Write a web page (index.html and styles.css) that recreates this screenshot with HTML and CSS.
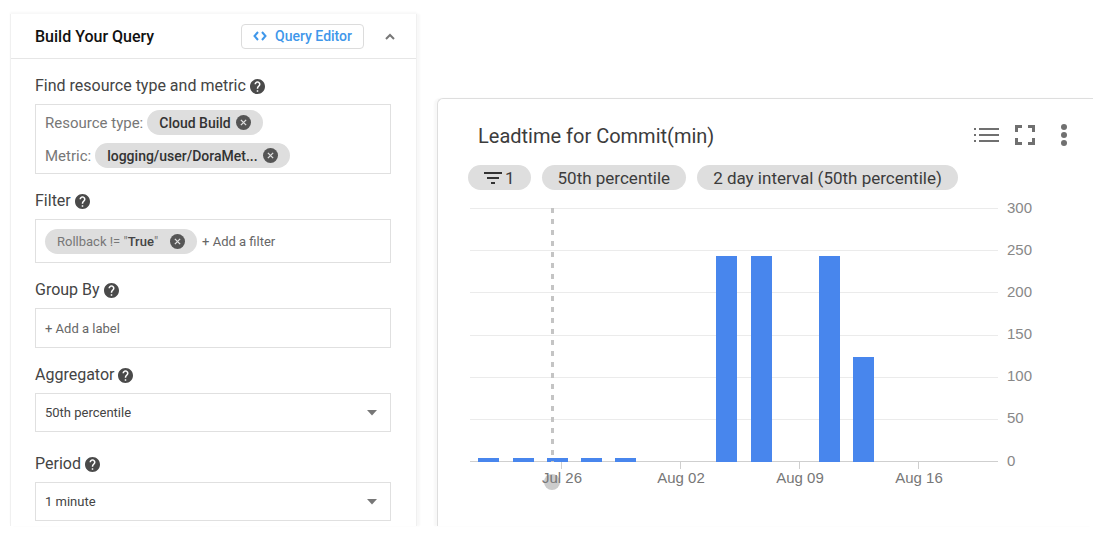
FILE: index.html
```html
<!DOCTYPE html>
<html lang="en">
<head>
<meta charset="utf-8">
<meta name="viewport" content="width=device-width, initial-scale=1">
<title>Leadtime for Commit</title>
<link rel="stylesheet" href="styles.css">
</head>
<body>
<svg class="defs" aria-hidden="true">
  <symbol id="help" viewBox="2 2 20 20"><path d="M12 2C6.480 2 2 6.480 2 12s4.480 10 10 10 10-4.480 10-10S17.520 2 12 2zm1 17h-2v-2h2v2zm2.070-7.750l-.9.920C13.450 12.900 13 13.500 13 15h-2v-.5c0-1.100.450-2.100 1.170-2.830l1.240-1.260c.370-.360.590-.860.590-1.410 0-1.100-.9-2-2-2s-2 .9-2 2H8c0-2.210 1.790-4 4-4s4 1.790 4 4c0 .880-.360 1.680-.930 2.250z" stroke="none"/></symbol>
  <symbol id="cancel" viewBox="2 2 20 20"><circle cx="12" cy="12" r="10"/><path d="M8.500 8.500l7 7m0-7l-7 7" stroke="#dedede" stroke-width="1.800"/></symbol>
  <symbol id="caret" viewBox="0 0 10 6"><path d="M0 0h10L5 5.500z"/></symbol>
</svg>
<main class="page">
  <form class="panel">
    <header class="panel-head">
      <h2 class="panel-title">Build Your Query</h2>
      <button type="button" class="editor-btn">
        <svg class="code-icon" viewBox="0 0 14 10" aria-hidden="true"><path d="M5 1L1.500 5 5 9M9 1l3.500 4L9 9"/></svg>
        Query Editor
      </button>
      <button type="button" class="collapse" aria-label="Collapse">
        <svg class="chevron" viewBox="0 0 10 7" aria-hidden="true"><path d="M1 6l4-4 4 4"/></svg>
      </button>
    </header>
    <div class="fields">
      <section class="field">
        <h3 class="label">Find resource type and metric <svg class="help"><use href="#help"/></svg></h3>
        <div class="box resource">
          <div class="row"><span class="key">Resource type:</span><span class="chip strong">Cloud Build<button type="button" class="remove" aria-label="Remove Cloud Build"><svg class="x"><use href="#cancel"/></svg></button></span></div>
          <div class="row"><span class="key">Metric:</span><span class="chip strong">logging/user/DoraMet...<button type="button" class="remove" aria-label="Remove metric"><svg class="x"><use href="#cancel"/></svg></button></span></div>
        </div>
      </section>
      <section class="field">
        <h3 class="label">Filter <svg class="help"><use href="#help"/></svg></h3>
        <div class="box filter">
          <span class="chip rule"><span>Rollback != "<b class="value">True</b>"</span><button type="button" class="remove" aria-label="Remove filter"><svg class="x"><use href="#cancel"/></svg></button></span>
          <button type="button" class="add">+ Add a filter</button>
        </div>
      </section>
      <section class="field">
        <h3 class="label">Group By <svg class="help"><use href="#help"/></svg></h3>
        <div class="box group"><button type="button" class="add">+ Add a label</button></div>
      </section>
      <section class="field choice">
        <label class="label" for="aggregator">Aggregator <svg class="help"><use href="#help"/></svg></label>
        <div class="select-wrap">
          <select id="aggregator" class="select"><option>50th percentile</option></select>
          <svg class="caret" aria-hidden="true"><use href="#caret"/></svg>
        </div>
      </section>
      <section class="field choice">
        <label class="label" for="period">Period <svg class="help"><use href="#help"/></svg></label>
        <div class="select-wrap">
          <select id="period" class="select"><option>1 minute</option></select>
          <svg class="caret" aria-hidden="true"><use href="#caret"/></svg>
        </div>
      </section>
    </div>
  </form>

  <section class="card">
    <header class="card-head">
      <h1 class="card-title">Leadtime for Commit(min)</h1>
      <div class="tools">
        <button type="button" class="tool" aria-label="Legend"><svg class="tool-icon" viewBox="0 0 26 26"><path d="M1 6h2v2H1zm0 6h2v2H1zm0 6h2v2H1zM6 6h20v2H6zm0 6h20v2H6zm0 6h20v2H6z"/></svg></button>
        <button type="button" class="tool" aria-label="Full screen"><svg class="tool-icon" viewBox="0 0 26 26"><path d="M3 3h7v3H6v4H3zM16 3h7v7h-3V6h-4zM3 16h3v4h4v3H3zM20 16h3v7h-7v-3h4z"/></svg></button>
        <button type="button" class="tool" aria-label="More options"><svg class="tool-icon" viewBox="0 0 26 26"><circle cx="13" cy="5" r="3"/><circle cx="13" cy="13" r="3"/><circle cx="13" cy="21" r="3"/></svg></button>
      </div>
    </header>
    <div class="tags">
      <button type="button" class="tag"><svg class="filter-icon" viewBox="0 0 18 12" aria-hidden="true"><path d="M0 0h18v2H0zM3 5h12v2H3zM7 10h4v2H7z"/></svg>1</button>
      <span class="tag">50th percentile</span>
      <span class="tag">2 day interval (50th percentile)</span>
    </div>
    <svg class="chart" viewBox="0 0 572 296" role="img" aria-label="Lead time per commit in minutes">
      <path class="grid" d="M2 8.500h528M2 50.500h528M2 92.500h528M2 135.500h528M2 177.500h528M2 219.500h528"/>
      <path class="axis" d="M2 261.500h528M93.500 262v7M212.500 262v7M331.500 262v7M450.500 262v7"/>
      <circle class="knob" cx="84" cy="282" r="8"/>
      <g class="bars">
        <rect x="10" y="258" width="21" height="4"/><rect x="45" y="258" width="21" height="4"/><rect x="79" y="258" width="21" height="4"/><rect x="113" y="258" width="21" height="4"/><rect x="147" y="258" width="21" height="4"/>
        <rect x="248" y="56" width="21" height="206"/><rect x="283" y="56" width="21" height="206"/><rect x="351" y="56" width="21" height="206"/><rect x="385" y="157" width="21" height="105"/>
      </g>
      <path class="cursor" d="M84.500 8v254"/>
      <g class="ticks">
        <text x="539" y="13">300</text><text x="539" y="55">250</text><text x="539" y="97">200</text><text x="539" y="139">150</text><text x="539" y="181">100</text><text x="539" y="223">50</text><text x="539" y="266">0</text>
      </g>
      <g class="ticks dates">
        <text x="94" y="283">Jul 26</text><text x="213" y="283">Aug 02</text><text x="332" y="283">Aug 09</text><text x="451" y="283">Aug 16</text>
      </g>
    </svg>
  </section>
</main>
</body>
</html>
```
FILE: styles.css
```css
* { box-sizing: border-box; }
body { margin: 0; background: #fff; font-family: Roboto, "Liberation Sans", sans-serif; color: #444; }
h1, h2, h3 { margin: 0; font-weight: 400; }
button { padding: 0; border: 0; background: none; font: inherit; color: inherit; cursor: pointer; }
svg { display: block; flex: none; }
.defs { position: absolute; width: 0; height: 0; }

.page { display: grid; grid-template-columns: 407fr 656fr; gap: 20px; align-items: start; padding: 14px 7px 18px 10px; }

.panel { min-width: 0; border: 1px solid #f0f0f0; border-width: 0 1px; box-shadow: 3px 0 2px #f8f8f8, 0 -2px 2px #f8f8f8; }
.panel-head { display: flex; align-items: center; height: 45px; padding: 0 19px 0 24px; border-bottom: 1px solid #e6e6e6; }
.panel-title { flex: 1; font-size: 16px; font-weight: 500; color: #111; }
.editor-btn { display: flex; align-items: center; justify-content: center; gap: 8px; width: 123px; height: 25px; border: 1px solid #dcdcdc; border-radius: 4px; font-size: 14px; font-weight: 500; color: #3f97ea; }
.code-icon { width: 14px; height: 10px; fill: none; stroke: #3f97ea; stroke-width: 2; }
.collapse { display: grid; place-items: center; width: 14px; height: 24px; margin-left: 19px; }
.chevron { width: 10px; height: 7px; fill: none; stroke: #777; stroke-width: 2; }

.fields { display: flex; flex-direction: column; gap: 17px; padding: 17px 25px 5px 24px; }
.field { display: flex; flex-direction: column; gap: 8px; }
.choice + .choice { padding-top: 5px; }
.label { display: flex; align-items: center; gap: 4px; height: 20px; font-size: 16px; line-height: 20px; color: #444; }
.help { width: 15px; height: 15px; fill: #4a4a4a; }
.box { border: 1px solid #e0e0e0; padding: 0 9px; font-size: 14px; }
.resource { display: grid; gap: 8px; padding: 5px 9px; }
.row { display: flex; align-items: center; gap: 4px; height: 25px; }
.key { font-size: 15px; color: #777; }
.chip { display: flex; align-items: center; height: 25px; padding: 0 12px; border-radius: 13px; background: #dedede; }
.strong { gap: 5px; font-weight: 500; color: #333; }
.x { width: 15px; height: 15px; fill: #555; }
.filter { display: flex; align-items: center; gap: 5px; height: 44px; }
.rule { gap: 12px; font-size: 13px; color: #777; }
.value { font-weight: 500; color: #444; }
.add { font-size: 13px; color: #666; }
.group { display: flex; align-items: center; height: 40px; }
.select-wrap { display: grid; align-items: center; }
.select-wrap > * { grid-area: 1 / 1; }
.select { appearance: none; width: 100%; height: 39px; padding: 0 30px 0 9px; border: 1px solid #e0e0e0; border-radius: 0; background: #fff; font: 13px Roboto, "Liberation Sans", sans-serif; color: #444; }
.caret { justify-self: end; width: 10px; height: 6px; margin-right: 14px; fill: #777; pointer-events: none; }

.card { min-width: 0; margin-top: 84px; min-height: 428px; padding: 23px 16px 0 30px; border: 1px solid #dedede; border-width: 1px 0 0 1px; border-radius: 6px 0 0 0; box-shadow: -3px 0 2px #f8f8f8; }
.card-head { display: flex; align-items: flex-start; justify-content: space-between; padding-left: 10px; }
.card-title { font-size: 20px; line-height: 28px; color: #3c3c3c; }
.tools { display: flex; gap: 13px; }
.tool-icon { width: 26px; height: 26px; fill: #707070; }
.tags { display: flex; gap: 11px; margin-top: 15px; }
.tag { display: flex; align-items: center; height: 25px; padding: 0 16px; border-radius: 13px; background: #dedede; font-size: 17px; color: #3c3c3c; white-space: nowrap; }
.filter-icon { width: 18px; height: 12px; margin-right: 3px; fill: #333; }
.chart { width: calc(100% - 37px); height: auto; margin-top: 10px; }
.grid { stroke: #ebebeb; }
.axis { stroke: #cfcfcf; fill: none; }
.bars { fill: #4886ed; }
.cursor { stroke: #c4c4c4; stroke-width: 3; stroke-dasharray: 5 6; }
.knob { fill: #ccc; }
.ticks { font: 15px "Liberation Sans", Arial, sans-serif; fill: #888; }
.dates { text-anchor: middle; fill: #777; }
```
